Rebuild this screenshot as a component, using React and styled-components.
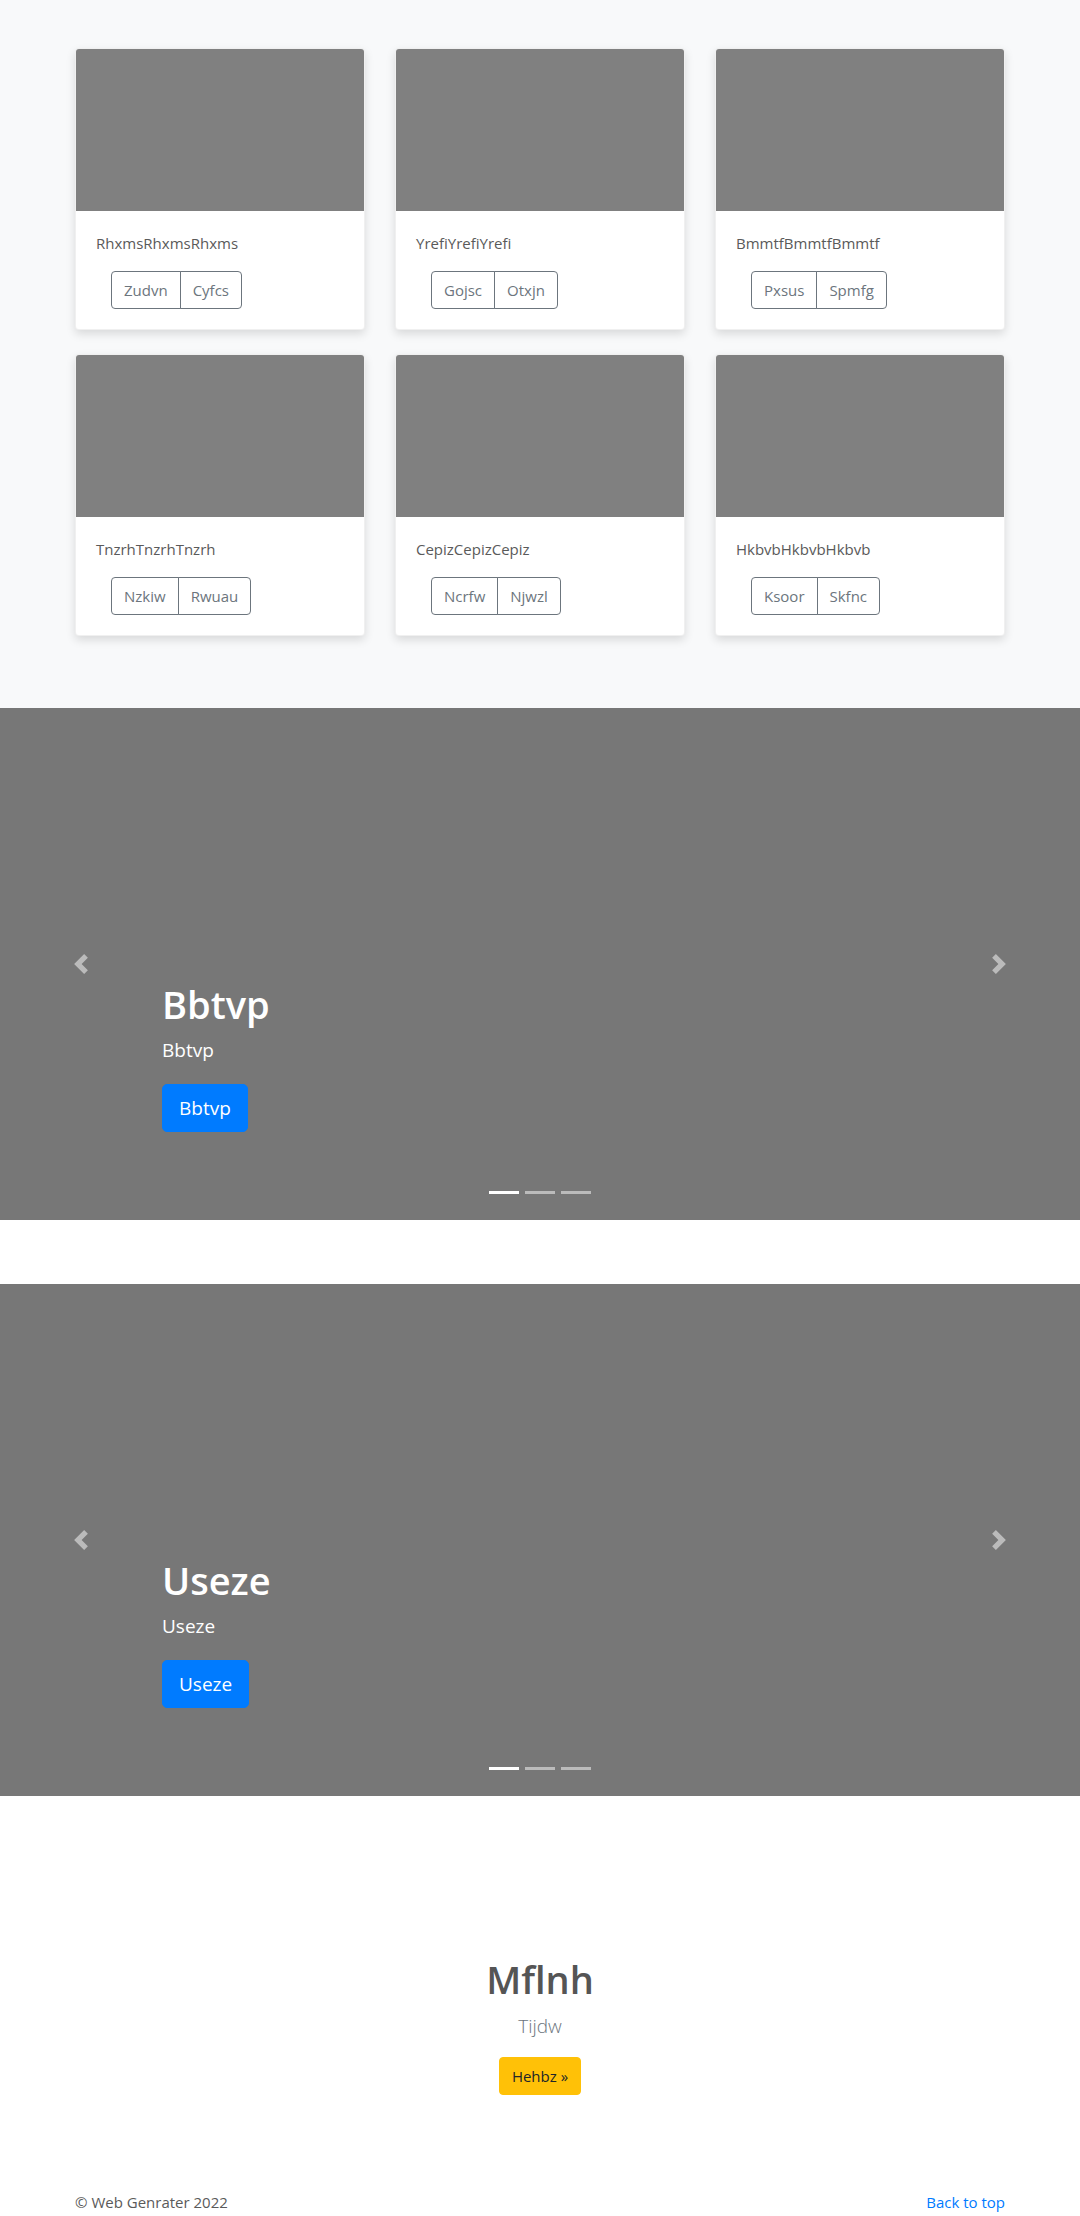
import React from "react";
import styled, { createGlobalStyle } from "styled-components";

const GlobalStyle = createGlobalStyle`
  * { box-sizing: border-box; }
  body {
    margin: 0;
    font-family: "Open Sans", "Noto Sans", sans-serif;
    font-size: 15px;
    line-height: 24px;
    color: #5a5a5a;
    background: #fff;
  }
  p { margin: 0; }
`;

const cards = [
  { title: "RhxmsRhxmsRhxms", actions: ["Zudvn", "Cyfcs"] },
  { title: "YrefiYrefiYrefi", actions: ["Gojsc", "Otxjn"] },
  { title: "BmmtfBmmtfBmmtf", actions: ["Pxsus", "Spmfg"] },
  { title: "TnzrhTnzrhTnzrh", actions: ["Nzkiw", "Rwuau"] },
  { title: "CepizCepizCepiz", actions: ["Ncrfw", "Njwzl"] },
  { title: "HkbvbHkbvbHkbvb", actions: ["Ksoor", "Skfnc"] },
];

const slides = ["Bbtvp", "Useze"];

const Container = styled.div`
  width: 930px;
  margin: 0 auto;
`;

const Album = styled.section`
  background: #f8f9fa;
  padding: 48px 0;
`;

const CardGrid = styled.div`
  display: grid;
  grid-template-columns: repeat(3, 290px);
  column-gap: 30px;
  row-gap: 24px;
  padding-bottom: 24px;
`;

const Card = styled.div`
  background: #fff;
  border-radius: 4px;
  overflow: hidden;
  box-shadow: 0 4px 10px rgba(0, 0, 0, 0.13);
  border: 1px solid rgba(0, 0, 0, 0.06);
`;

const Thumb = styled.div`
  height: 162px;
  background: #808080;
`;

const CardBody = styled.div`
  padding: 20px;
`;

const CardText = styled.p`
  margin-bottom: 16px;
  color: #5a5a5a;
`;

const BtnGroup = styled.div`
  display: inline-flex;
  margin-left: 15px;
`;

const OutlineBtn = styled.button`
  font-family: inherit;
  font-size: 15px;
  line-height: 24px;
  padding: 6px 12px;
  color: #6c757d;
  background: transparent;
  border: 1px solid #6c757d;
  border-radius: ${(p) => (p.$first ? "4px 0 0 4px" : "0 4px 4px 0")};
  margin-left: ${(p) => (p.$first ? "0" : "-1px")};
  cursor: pointer;
`;

const Carousel = styled.div`
  position: relative;
  height: 512px;
  background: #777;
  margin-bottom: 64px;
  display: flex;
  flex-direction: column;
  justify-content: flex-end;
  padding: 0 162px 68px;
  color: #fff;
`;

const SlideTitle = styled.h1`
  margin: 0 0 8px;
  font-size: 38px;
  line-height: 48px;
  font-weight: 600;
`;

const SlideText = styled.p`
  font-size: 19px;
  line-height: 28px;
  margin-bottom: 20px;
`;

const SlideAction = styled.p`
  margin-bottom: 20px;
`;

const PrimaryBtn = styled.a`
  display: inline-block;
  font-size: 19px;
  line-height: 30px;
  padding: 8px 16px;
  border-radius: 5px;
  background: #007bff;
  border: 1px solid #007bff;
  color: #fff;
  text-decoration: none;
`;

const Control = styled.a`
  position: absolute;
  top: 0;
  bottom: 0;
  ${(p) => (p.$side === "prev" ? "left: 0;" : "right: 0;")}
  width: 15%;
  display: flex;
  align-items: center;
  justify-content: center;
  opacity: 0.5;
`;

const Indicators = styled.ol`
  position: absolute;
  left: 0;
  right: 0;
  bottom: 26px;
  margin: 0;
  padding: 0;
  list-style: none;
  display: flex;
  justify-content: center;
  gap: 6px;
`;

const Dot = styled.li`
  width: 30px;
  height: 3px;
  background: #fff;
  opacity: ${(p) => (p.$active ? 1 : 0.5)};
`;

const Jumbotron = styled.section`
  text-align: center;
  padding: 95px 32px 64px;
  margin-bottom: 31px;
`;

const JumboTitle = styled.h1`
  margin: 0 0 8px;
  font-size: 38px;
  line-height: 48px;
  font-weight: 600;
  color: #555;
`;

const Lead = styled.p`
  font-size: 19px;
  line-height: 30px;
  font-weight: 300;
  color: #6c757d;
  margin-bottom: 16px;
`;

const WarningBtn = styled.a`
  display: inline-block;
  font-size: 15px;
  line-height: 24px;
  padding: 6px 12px;
  border-radius: 4px;
  background: #ffc107;
  border: 1px solid #ffc107;
  color: #212529;
  text-decoration: none;
`;

const Footer = styled.footer`
  display: flex;
  justify-content: space-between;
  padding-bottom: 48px;
`;

const TopLink = styled.a`
  color: #007bff;
  text-decoration: none;
`;

const Chevron = ({ side }) => (
  <svg width="20" height="20" viewBox="0 0 8 8" fill="#fff">
    <path
      d={
        side === "prev"
          ? "M5.25 0l-4 4 4 4 1.5-1.5L4.25 4l2.5-2.5L5.25 0z"
          : "M2.75 0l-1.5 1.5L3.75 4l-2.5 2.5L2.75 8l4-4-4-4z"
      }
    />
  </svg>
);

const Slide = ({ label }) => (
  <Carousel>
    <SlideTitle>{label}</SlideTitle>
    <SlideText>{label}</SlideText>
    <SlideAction>
      <PrimaryBtn href="#">{label}</PrimaryBtn>
    </SlideAction>
    <Control $side="prev" href="#">
      <Chevron side="prev" />
    </Control>
    <Control $side="next" href="#">
      <Chevron side="next" />
    </Control>
    <Indicators>
      <Dot $active />
      <Dot />
      <Dot />
    </Indicators>
  </Carousel>
);

export default function App() {
  return (
    <>
      <GlobalStyle />
      <Album>
        <Container>
          <CardGrid>
            {cards.map((card) => (
              <Card key={card.title}>
                <Thumb />
                <CardBody>
                  <CardText>{card.title}</CardText>
                  <BtnGroup>
                    <OutlineBtn $first>{card.actions[0]}</OutlineBtn>
                    <OutlineBtn>{card.actions[1]}</OutlineBtn>
                  </BtnGroup>
                </CardBody>
              </Card>
            ))}
          </CardGrid>
        </Container>
      </Album>
      {slides.map((s) => (
        <Slide key={s} label={s} />
      ))}
      <Jumbotron>
        <JumboTitle>Mflnh</JumboTitle>
        <Lead>Tijdw</Lead>
        <WarningBtn href="#">Hehbz »</WarningBtn>
      </Jumbotron>
      <Container>
        <Footer>
          <p>© Web Genrater 2022</p>
          <TopLink href="#">Back to top</TopLink>
        </Footer>
      </Container>
    </>
  );
}
